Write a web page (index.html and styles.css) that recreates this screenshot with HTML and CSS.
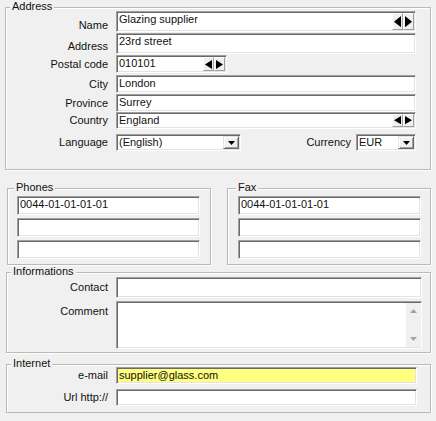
FILE: index.html
```html
<!DOCTYPE html>
<html lang="en">
<head>
<meta charset="utf-8">
<title>Supplier</title>
<link rel="stylesheet" href="styles.css">
</head>
<body>
<main class="form">
  <section class="group g-address">
    <div class="group-title">Address</div>
    <div class="row r-name">
      <span class="label lb-bottom">Name</span>
      <div class="field f-grow">
        <span class="val">Glazing supplier</span>
        <span class="spin">
          <span class="spin-btn"><svg viewBox="0 0 7 12" preserveAspectRatio="none"><path d="M7 0V12L0 6Z"/></svg></span>
          <span class="spin-btn"><svg viewBox="0 0 7 12" preserveAspectRatio="none"><path d="M0 0V12L7 6Z"/></svg></span>
        </span>
      </div>
    </div>
    <div class="row r-addr">
      <span class="label lb-bottom lb-addr">Address</span>
      <div class="field f-grow"><span class="val">23rd street</span></div>
    </div>
    <div class="row r-postal">
      <span class="label">Postal code</span>
      <div class="field f-postal">
        <span class="val">010101</span>
        <span class="spin">
          <span class="spin-btn"><svg viewBox="0 0 7 12" preserveAspectRatio="none"><path d="M7 0V12L0 6Z"/></svg></span>
          <span class="spin-btn"><svg viewBox="0 0 7 12" preserveAspectRatio="none"><path d="M0 0V12L7 6Z"/></svg></span>
        </span>
      </div>
    </div>
    <div class="row r-city">
      <span class="label">City</span>
      <div class="field f-grow"><span class="val">London</span></div>
    </div>
    <div class="row r-prov">
      <span class="label">Province</span>
      <div class="field f-grow"><span class="val">Surrey</span></div>
    </div>
    <div class="row r-country">
      <span class="label">Country</span>
      <div class="field f-grow">
        <span class="val">England</span>
        <span class="spin">
          <span class="spin-btn"><svg viewBox="0 0 7 12" preserveAspectRatio="none"><path d="M7 0V12L0 6Z"/></svg></span>
          <span class="spin-btn"><svg viewBox="0 0 7 12" preserveAspectRatio="none"><path d="M0 0V12L7 6Z"/></svg></span>
        </span>
      </div>
    </div>
    <div class="row r-lang">
      <span class="label">Language</span>
      <div class="field combo f-lang">
        <span class="val">(English)</span>
        <span class="drop"><svg width="7" height="4" viewBox="0 0 7 4"><path d="M0 0H7L3.5 4Z"/></svg></span>
      </div>
      <span class="spacer"></span>
      <span class="label-inline">Currency</span>
      <div class="field combo f-cur">
        <span class="val">EUR</span>
        <span class="drop"><svg width="7" height="4" viewBox="0 0 7 4"><path d="M0 0H7L3.5 4Z"/></svg></span>
      </div>
    </div>
  </section>

  <div class="pair">
    <section class="group g-phones">
      <div class="group-title">Phones</div>
      <div class="field f-line first"><span class="val">0044-01-01-01-01</span></div>
      <div class="field f-line"></div>
      <div class="field f-line"></div>
    </section>
    <section class="group g-fax">
      <div class="group-title">Fax</div>
      <div class="field f-line first"><span class="val">0044-01-01-01-01</span></div>
      <div class="field f-line"></div>
      <div class="field f-line"></div>
    </section>
  </div>

  <section class="group g-info">
    <div class="group-title">Informations</div>
    <div class="row r-contact">
      <span class="label">Contact</span>
      <div class="field f-info"></div>
    </div>
    <div class="row r-comment">
      <span class="label lb-top">Comment</span>
      <div class="field f-info memo">
        <span class="val"></span>
        <span class="vscroll">
          <svg width="7" height="4" viewBox="0 0 7 4"><path d="M0 4H7L3.5 0Z"/></svg>
          <svg width="7" height="4" viewBox="0 0 7 4"><path d="M0 0H7L3.5 4Z"/></svg>
        </span>
      </div>
    </div>
  </section>

  <section class="group g-net">
    <div class="group-title">Internet</div>
    <div class="row r-mail">
      <span class="label">e-mail</span>
      <div class="field f-net highlight"><span class="val">supplier@glass.com</span></div>
    </div>
    <div class="row r-url">
      <span class="label">Url http://</span>
      <div class="field f-net"></div>
    </div>
  </section>
</main>
</body>
</html>
```

FILE: styles.css
```css
html, body {
  margin: 0;
  background: #f0f0f0;
}

body {
  font-family: "Liberation Sans", Arial, sans-serif;
  font-size: 11px;
  line-height: 13px;
  color: #111;
}

.form {
  width: 436px;
}

/* group boxes */
.group {
  box-sizing: border-box;
  border: 1px solid #b9b9b9;
  box-shadow: 1px 1px 0 #fff, inset 1px 1px 0 #fff;
}

.group-title {
  width: fit-content;
  height: 13px;
  margin: -8px 0 0 3px;
  padding: 0 2px;
  background: #f0f0f0;
  white-space: nowrap;
}

.g-address {
  width: 426px;
  margin: 7px 0 0 5px;
  padding: 0 14px 18px 1px;
}

.pair {
  display: flex;
  gap: 16px;
  margin-top: 18px;
  padding-left: 7px;
}

.g-phones,
.g-fax {
  width: 204px;
  padding: 0 0 5px 9px;
}

.g-fax {
  padding-left: 10px;
}

.g-phones .group-title {
  margin-left: -3px;
}

.g-fax .group-title {
  margin-left: -2px;
}

.g-info {
  width: 425px;
  margin: 7px 0 0 6px;
  padding: 0 0 3px 0;
}

.g-net {
  width: 425px;
  margin: 11px 0 0 6px;
  padding: 0 0 6px 0;
}

.g-info .group-title,
.g-net .group-title {
  margin-left: 4px;
}

/* rows */
.row {
  display: flex;
  align-items: center;
}

.label {
  flex: none;
  width: 101px;
  margin-right: 8px;
  text-align: right;
  white-space: nowrap;
}

.lb-bottom {
  align-self: flex-end;
}

.lb-addr {
  padding-bottom: 1px;
}

.lb-top {
  align-self: flex-start;
  padding-top: 4px;
}

.label-inline {
  margin-right: 5px;
  white-space: nowrap;
}

.spacer {
  flex: 1;
}

.r-name { height: 21px; margin-top: -2px; }
.r-addr { height: 21px; margin-top: 1px; }
.r-postal { height: 18px; margin-top: 1px; }
.r-city { height: 18px; margin-top: 2px; }
.r-prov { height: 18px; margin-top: 1px; }
.r-country { height: 17px; margin-top: 0; }
.r-lang { height: 17px; margin-top: 5px; }

.r-contact { height: 21px; margin-top: -1px; }
.r-comment { height: 48px; margin-top: 3px; }

.r-mail { height: 17px; margin-top: -3px; }
.r-url { height: 17px; margin-top: 5px; }

/* sunken edit fields */
.field {
  box-sizing: border-box;
  display: flex;
  align-self: stretch;
  border: 1px solid;
  border-color: #a0a0a0 #fff #fff #a0a0a0;
  box-shadow: inset 1px 1px 0 #696969, inset -1px -1px 0 #e3e3e3;
  background: #fff;
  padding: 1px;
}

.val {
  flex: 1;
  min-width: 0;
  padding-left: 1px;
  white-space: nowrap;
  overflow: hidden;
}

.f-grow { flex: 1; }
.f-postal { width: 111px; }
.f-lang { width: 125px; }
.f-cur { width: 60px; }
.f-info { width: 306px; }
.f-net { width: 301px; }

.f-line {
  width: 183px;
  height: 19px;
  margin-top: 3px;
}

.f-line.first {
  margin-top: 2px;
}

.highlight {
  background: #ffff80;
}

/* spinner */
.spin {
  display: flex;
  flex: none;
}

.spin-btn {
  box-sizing: border-box;
  width: 11px;
  display: flex;
  align-items: center;
  justify-content: center;
  background: #f0f0f0;
  border: 1px solid;
  border-color: #fff #a0a0a0 #a0a0a0 #fff;
}

.spin-btn svg {
  width: 7px;
  height: 75%;
  fill: #000;
}

/* combo drop button */
.drop {
  box-sizing: border-box;
  flex: none;
  width: 16px;
  display: flex;
  align-items: center;
  justify-content: center;
  background: #f0f0f0;
  border: 1px solid;
  border-color: #e3e3e3 #696969 #696969 #e3e3e3;
  box-shadow: inset 1px 1px 0 #fff, inset -1px -1px 0 #a0a0a0;
}

.drop svg {
  fill: #000;
}

/* memo scrollbar */
.memo {
  padding-right: 0;
}

.vscroll {
  flex: none;
  width: 15px;
  display: flex;
  flex-direction: column;
  align-items: center;
  justify-content: space-between;
  padding: 6px 0 6px;
  box-sizing: border-box;
  background: #f0f0f0;
}

.vscroll svg {
  fill: #a3a3a3;
}
```
